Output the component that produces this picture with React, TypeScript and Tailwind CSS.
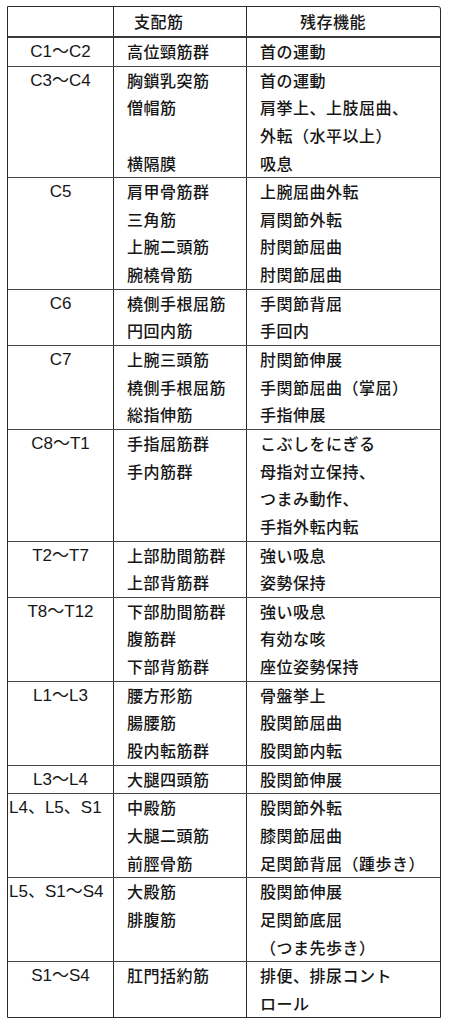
import React from 'react';

type Row = { seg: string; left?: boolean; m: string[]; f: string[] };

const rows: Row[] = [
  { seg: 'C1～C2', m: ['高位頸筋群'], f: ['首の運動'] },
  {
    seg: 'C3～C4',
    m: ['胸鎖乳突筋', '僧帽筋', '', '横隔膜'],
    f: ['首の運動', '肩挙上、上肢屈曲、', '外転（水平以上）', '吸息'],
  },
  {
    seg: 'C5',
    m: ['肩甲骨筋群', '三角筋', '上腕二頭筋', '腕橈骨筋'],
    f: ['上腕屈曲外転', '肩関節外転', '肘関節屈曲', '肘関節屈曲'],
  },
  { seg: 'C6', m: ['橈側手根屈筋', '円回内筋'], f: ['手関節背屈', '手回内'] },
  {
    seg: 'C7',
    m: ['上腕三頭筋', '橈側手根屈筋', '総指伸筋'],
    f: ['肘関節伸展', '手関節屈曲（掌屈）', '手指伸展'],
  },
  {
    seg: 'C8～T1',
    m: ['手指屈筋群', '手内筋群'],
    f: ['こぶしをにぎる', '母指対立保持、', 'つまみ動作、', '手指外転内転'],
  },
  { seg: 'T2～T7', m: ['上部肋間筋群', '上部背筋群'], f: ['強い吸息', '姿勢保持'] },
  {
    seg: 'T8～T12',
    m: ['下部肋間筋群', '腹筋群', '下部背筋群'],
    f: ['強い吸息', '有効な咳', '座位姿勢保持'],
  },
  {
    seg: 'L1～L3',
    m: ['腰方形筋', '腸腰筋', '股内転筋群'],
    f: ['骨盤挙上', '股関節屈曲', '股関節内転'],
  },
  { seg: 'L3～L4', m: ['大腿四頭筋'], f: ['股関節伸展'] },
  {
    seg: 'L4、L5、S1',
    left: true,
    m: ['中殿筋', '大腿二頭筋', '前脛骨筋'],
    f: ['股関節外転', '膝関節屈曲', '足関節背屈（踵歩き）'],
  },
  {
    seg: 'L5、S1～S4',
    left: true,
    m: ['大殿筋', '腓腹筋'],
    f: ['股関節伸展', '足関節底屈', '（つま先歩き）'],
  },
  { seg: 'S1～S4', m: ['肛門括約筋'], f: ['排便、排尿コント', 'ロール'] },
];

const cjk = "font-['Noto_Sans_CJK_JP','Noto_Sans',sans-serif]";
const latin = "font-['Liberation_Sans','Noto_Sans_CJK_JP',sans-serif]";

function Lines({ items, count }: { items: string[]; count: number }) {
  const list = Array.from({ length: count }, (_, i) => items[i] ?? '');
  return (
    <>
      {list.map((t, i) => (
        <div key={i} className="h-[27.65px] leading-[27.65px] whitespace-nowrap">
          {t || '\u00a0'}
        </div>
      ))}
    </>
  );
}

export default function App() {
  return (
    <div className="min-h-screen bg-white pt-[6px] pl-[7px] text-[#161616]">
      <div className={`w-[434px] border border-[#2a2a2a] rounded-tr-[3px] ${cjk} font-medium`}>
        <div className="grid grid-cols-[106px_133px_193px] h-[31px] border-b-2 border-[#3a3a3a] text-[16px] leading-[29px]">
          <div className="border-r border-[#2a2a2a]"></div>
          <div className="border-r border-[#2a2a2a] pl-[20px] tracking-[0.5px]">支配筋</div>
          <div className="pl-[53px] tracking-[0.5px]">残存機能</div>
        </div>
        {rows.map((r, i) => {
          const n = Math.max(r.m.length, r.f.length);
          const last = i === rows.length - 1;
          return (
            <div
              key={r.seg}
              className={`grid grid-cols-[106px_133px_193px] ${last ? '' : 'border-b border-[#474747]'}`}
            >
              <div
                className={`border-r border-[#2a2a2a] ${latin} text-[17px] font-normal ${
                  r.left ? 'text-left pl-[1px]' : 'text-center'
                }`}
              >
                <div className="h-[27.65px] leading-[27.65px] whitespace-nowrap">{r.seg}</div>
              </div>
              <div className="border-r border-[#2a2a2a] pl-[13px] text-[16px] tracking-[0.5px]">
                <Lines items={r.m} count={n} />
              </div>
              <div className="pl-[13px] text-[16px] tracking-[0.5px]">
                <Lines items={r.f} count={n} />
              </div>
            </div>
          );
        })}
      </div>
    </div>
  );
}
